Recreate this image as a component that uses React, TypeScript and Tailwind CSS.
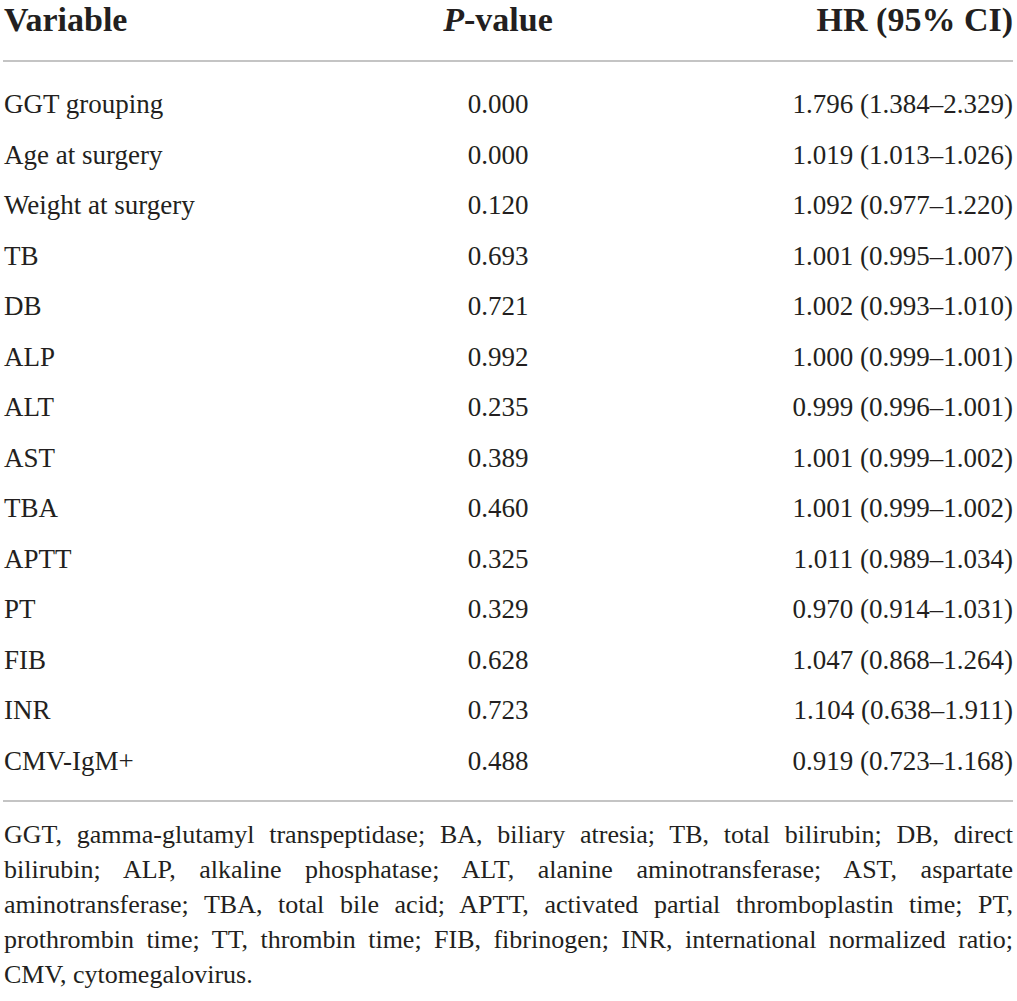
import React from 'react';

const rows: [string, string, string][] = [
  ['GGT grouping', '0.000', '1.796 (1.384–2.329)'],
  ['Age at surgery', '0.000', '1.019 (1.013–1.026)'],
  ['Weight at surgery', '0.120', '1.092 (0.977–1.220)'],
  ['TB', '0.693', '1.001 (0.995–1.007)'],
  ['DB', '0.721', '1.002 (0.993–1.010)'],
  ['ALP', '0.992', '1.000 (0.999–1.001)'],
  ['ALT', '0.235', '0.999 (0.996–1.001)'],
  ['AST', '0.389', '1.001 (0.999–1.002)'],
  ['TBA', '0.460', '1.001 (0.999–1.002)'],
  ['APTT', '0.325', '1.011 (0.989–1.034)'],
  ['PT', '0.329', '0.970 (0.914–1.031)'],
  ['FIB', '0.628', '1.047 (0.868–1.264)'],
  ['INR', '0.723', '1.104 (0.638–1.911)'],
  ['CMV-IgM+', '0.488', '0.919 (0.723–1.168)'],
];

const cols = 'grid grid-cols-[393px_204px_1fr] items-center';

export default function App() {
  return (
    <div
      className="w-[1017px] h-[1001px] bg-white pl-[3px] pr-[4px] text-[#231f20]"
      style={{ fontFamily: '"Liberation Serif", "Times New Roman", serif' }}
    >
      <div className={`${cols} h-[60px] text-[34px] font-bold leading-[40px] pb-[20px]`}>
        <div className="pl-px">Variable</div>
        <div className="text-center">
          <span className="italic">P</span>-value
        </div>
        <div className="text-right">HR (95% CI)</div>
      </div>
      <div className="h-[2px] bg-[#c4c4c4]" />

      <div className="pt-[17px] pb-[14px] text-[27px]">
        {rows.map(([name, p, hr]) => (
          <div key={name} className={`${cols} h-[50.5px] leading-[50px]`}>
            <div className="pl-px">{name}</div>
            <div className="text-center">{p}</div>
            <div className="text-right">{hr}</div>
          </div>
        ))}
      </div>
      <div className="h-[2px] bg-[#c4c4c4]" />

      <p className="pt-[15px] text-[26px] leading-[35px] text-justify pl-px">
        GGT, gamma-glutamyl transpeptidase; BA, biliary atresia; TB, total bilirubin; DB, direct
        bilirubin; ALP, alkaline phosphatase; ALT, alanine aminotransferase; AST, aspartate
        aminotransferase; TBA, total bile acid; APTT, activated partial thromboplastin time; PT,
        prothrombin time; TT, thrombin time; FIB, fibrinogen; INR, international normalized ratio;
        CMV, cytomegalovirus.
      </p>
    </div>
  );
}
